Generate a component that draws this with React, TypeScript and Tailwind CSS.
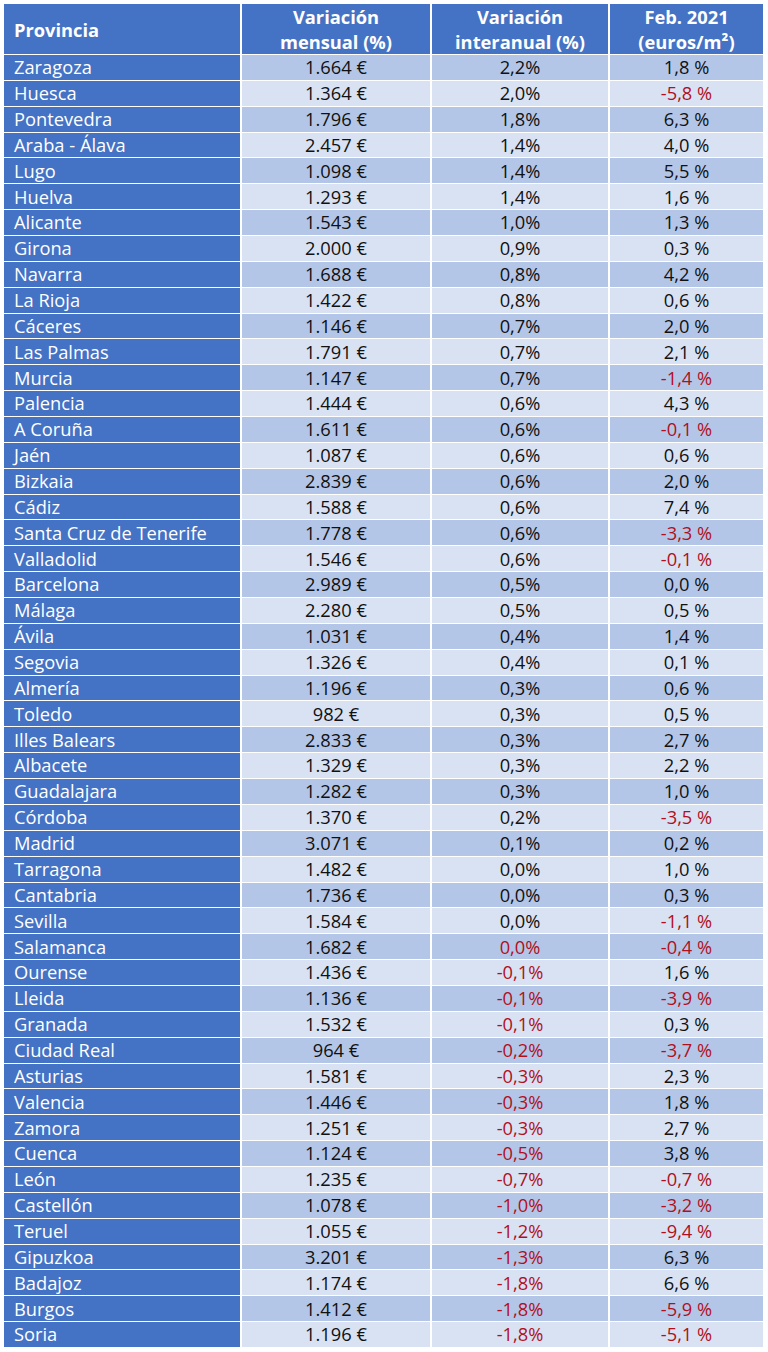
import React from "react";

type Row = [string, string, string, string];

const rows: Row[] = [
  ["Zaragoza", "1.664 €", "2,2%", "1,8 %"],
  ["Huesca", "1.364 €", "2,0%", "-5,8 %"],
  ["Pontevedra", "1.796 €", "1,8%", "6,3 %"],
  ["Araba - Álava", "2.457 €", "1,4%", "4,0 %"],
  ["Lugo", "1.098 €", "1,4%", "5,5 %"],
  ["Huelva", "1.293 €", "1,4%", "1,6 %"],
  ["Alicante", "1.543 €", "1,0%", "1,3 %"],
  ["Girona", "2.000 €", "0,9%", "0,3 %"],
  ["Navarra", "1.688 €", "0,8%", "4,2 %"],
  ["La Rioja", "1.422 €", "0,8%", "0,6 %"],
  ["Cáceres", "1.146 €", "0,7%", "2,0 %"],
  ["Las Palmas", "1.791 €", "0,7%", "2,1 %"],
  ["Murcia", "1.147 €", "0,7%", "-1,4 %"],
  ["Palencia", "1.444 €", "0,6%", "4,3 %"],
  ["A Coruña", "1.611 €", "0,6%", "-0,1 %"],
  ["Jaén", "1.087 €", "0,6%", "0,6 %"],
  ["Bizkaia", "2.839 €", "0,6%", "2,0 %"],
  ["Cádiz", "1.588 €", "0,6%", "7,4 %"],
  ["Santa Cruz de Tenerife", "1.778 €", "0,6%", "-3,3 %"],
  ["Valladolid", "1.546 €", "0,6%", "-0,1 %"],
  ["Barcelona", "2.989 €", "0,5%", "0,0 %"],
  ["Málaga", "2.280 €", "0,5%", "0,5 %"],
  ["Ávila", "1.031 €", "0,4%", "1,4 %"],
  ["Segovia", "1.326 €", "0,4%", "0,1 %"],
  ["Almería", "1.196 €", "0,3%", "0,6 %"],
  ["Toledo", "982 €", "0,3%", "0,5 %"],
  ["Illes Balears", "2.833 €", "0,3%", "2,7 %"],
  ["Albacete", "1.329 €", "0,3%", "2,2 %"],
  ["Guadalajara", "1.282 €", "0,3%", "1,0 %"],
  ["Córdoba", "1.370 €", "0,2%", "-3,5 %"],
  ["Madrid", "3.071 €", "0,1%", "0,2 %"],
  ["Tarragona", "1.482 €", "0,0%", "1,0 %"],
  ["Cantabria", "1.736 €", "0,0%", "0,3 %"],
  ["Sevilla", "1.584 €", "0,0%", "-1,1 %"],
  ["Salamanca", "1.682 €", "0,0%", "-0,4 %"],
  ["Ourense", "1.436 €", "-0,1%", "1,6 %"],
  ["Lleida", "1.136 €", "-0,1%", "-3,9 %"],
  ["Granada", "1.532 €", "-0,1%", "0,3 %"],
  ["Ciudad Real", "964 €", "-0,2%", "-3,7 %"],
  ["Asturias", "1.581 €", "-0,3%", "2,3 %"],
  ["Valencia", "1.446 €", "-0,3%", "1,8 %"],
  ["Zamora", "1.251 €", "-0,3%", "2,7 %"],
  ["Cuenca", "1.124 €", "-0,5%", "3,8 %"],
  ["León", "1.235 €", "-0,7%", "-0,7 %"],
  ["Castellón", "1.078 €", "-1,0%", "-3,2 %"],
  ["Teruel", "1.055 €", "-1,2%", "-9,4 %"],
  ["Gipuzkoa", "3.201 €", "-1,3%", "6,3 %"],
  ["Badajoz", "1.174 €", "-1,8%", "6,6 %"],
  ["Burgos", "1.412 €", "-1,8%", "-5,9 %"],
  ["Soria", "1.196 €", "-1,8%", "-5,1 %"],
];

const RED = "text-[#b0101c]";

export default function App() {
  return (
    <div
      className="w-[768px] h-[1352px] bg-white p-[4px]"
      style={{ fontFamily: '"Open Sans", "Noto Sans", sans-serif' }}
    >
      <div className="grid w-[759px] grid-cols-[236px_188px_176px_153px] gap-x-[2px] gap-y-px text-[18.3px] text-[#111]">
        <div className="h-[50px] bg-[#4472c4] text-white font-bold flex items-center pl-[10px] leading-[25px]">
          Provincia
        </div>
        <div className="h-[50px] bg-[#4472c4] text-white font-bold flex flex-col items-center justify-center leading-[25px]">
          <span>Variación</span>
          <span>mensual (%)</span>
        </div>
        <div className="h-[50px] bg-[#4472c4] text-white font-bold flex flex-col items-center justify-center leading-[25px]">
          <span>Variación</span>
          <span>interanual (%)</span>
        </div>
        <div className="h-[50px] bg-[#4472c4] text-white font-bold flex flex-col items-center justify-center leading-[25px]">
          <span>Feb. 2021</span>
          <span>(euros/m²)</span>
        </div>
        {rows.map((r, i) => {
          const bg = i % 2 === 0 ? "bg-[#b4c6e7]" : "bg-[#d9e2f3]";
          const red3 = r[2].startsWith("-") || r[0] === "Salamanca";
          const red4 = r[3].startsWith("-");
          return (
            <React.Fragment key={r[0]}>
              <div className="h-[24.86px] bg-[#4472c4] text-white flex items-center pl-[10px] leading-none">
                {r[0]}
              </div>
              <div className={`h-[24.86px] ${bg} flex items-center justify-center leading-none`}>
                {r[1]}
              </div>
              <div className={`h-[24.86px] ${bg} flex items-center justify-center leading-none ${red3 ? RED : ""}`}>
                {r[2]}
              </div>
              <div className={`h-[24.86px] ${bg} flex items-center justify-center leading-none ${red4 ? RED : ""}`}>
                {r[3]}
              </div>
            </React.Fragment>
          );
        })}
      </div>
    </div>
  );
}
